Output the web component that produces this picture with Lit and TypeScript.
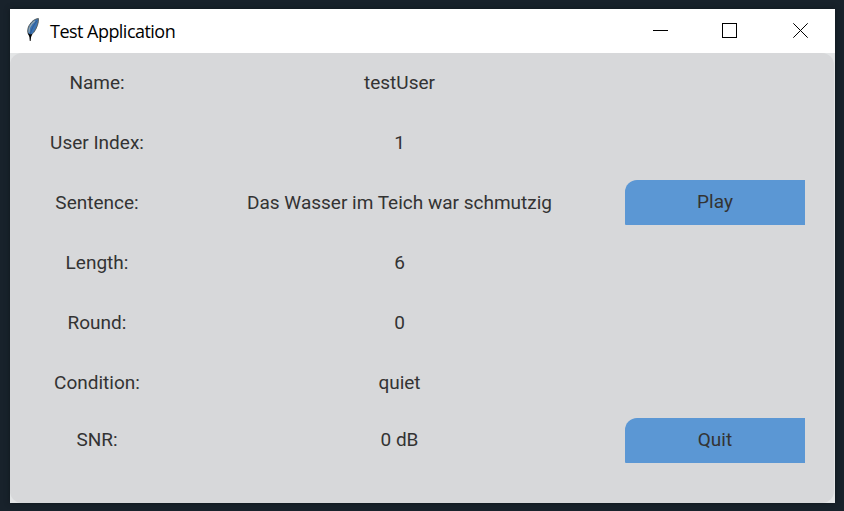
import { LitElement, html, css, svg } from "lit";
import { customElement, property } from "lit/decorators.js";

interface Field {
  label: string;
  value: string;
  action?: string;
}

const fields: Field[] = [
  { label: "Name:", value: "testUser" },
  { label: "User Index:", value: "1" },
  { label: "Sentence:", value: "Das Wasser im Teich war schmutzig", action: "Play" },
  { label: "Length:", value: "6" },
  { label: "Round:", value: "0" },
  { label: "Condition:", value: "quiet" },
  { label: "SNR:", value: "0 dB", action: "Quit" },
];

const controls = [
  { name: "Minimize", shape: svg`<path d="M0 7.5H15" />` },
  { name: "Maximize", shape: svg`<rect x="0.5" y="0.5" width="14" height="14" />` },
  { name: "Close", shape: svg`<path d="M0.3 0.3L14.7 14.7M14.7 0.3L0.3 14.7" shape-rendering="auto" />` },
];

@customElement("title-bar")
class TitleBar extends LitElement {
  @property() heading = "";

  static styles = css`
    :host {
      display: flex;
      height: 44px;
      background: #fff;
      color: #000;
    }
    .feather {
      width: 15px;
      height: 25px;
      margin: 8px 0 0 16px;
    }
    .heading {
      flex: 1;
      margin-left: 9px;
      font: 400 18px/45px "Open Sans", "Noto Sans", sans-serif;
      letter-spacing: -0.53px;
      white-space: nowrap;
    }
    .controls {
      display: flex;
      padding: 14px 27px 0 0;
      gap: 55px;
    }
    .control {
      width: 15px;
      height: 15px;
      padding: 0;
      border: 0;
      background: none;
    }
    .control:nth-child(2) {
      margin: 0 1px 0 -1px;
    }
    .glyph {
      display: block;
      fill: none;
      stroke: #000;
      stroke-width: 1;
      shape-rendering: crispEdges;
    }
  `;

  render() {
    return html`
      <svg class="feather" viewBox="0 0 15 25">
        <path d="M2.6 17.5C1 14.5 1.6 10.8 3.8 7.4C6 4 9 1.9 12.4 1.5C12.8 5.5 11 11.2 7.6 15.6C6.4 17 5.4 18 4.3 18.3Z" fill="#3b73b4" stroke="#59605f" stroke-width="1" />
        <path d="M3 15.5C2.8 11 5 7 8.8 4" fill="none" stroke="#9aa9ac" stroke-width="1.1" />
        <path d="M4.2 17.5C5.2 12.5 7.6 8 11 3.6" fill="none" stroke="#2b5488" stroke-width="0.8" />
        <path d="M1.8 16L4.2 17.6L6.3 17L5.1 20L4.6 24H3.8L3.4 20Z" fill="#000" />
      </svg>
      <div class="heading">${this.heading}</div>
      <div class="controls">
        ${controls.map(
          (c) => html`<button class="control" aria-label=${c.name}>
            <svg class="glyph" width="15" height="15" viewBox="0 0 15 15">${c.shape}</svg>
          </button>`
        )}
      </div>
    `;
  }
}

@customElement("app-root")
class AppRoot extends LitElement {
  static styles = css`
    :host {
      display: block;
      box-sizing: border-box;
      height: 511px;
      padding: 9px 9px 8px 10px;
      background: #18222b;
    }
    .window {
      background: #e3e5e6;
      height: 494px;
      box-shadow: 0 0 5px #10181e;
    }
    .panel {
      box-sizing: border-box;
      height: 450px;
      margin-right: 1px;
      border-radius: 12px;
      background: #d7d8da;
      display: grid;
      grid-template-columns: 174px 431px 219px;
      grid-template-rows: repeat(6, 60px) 54px;
      color: #333;
      font: 19px/24px Roboto, sans-serif;
    }
    .cell {
      display: flex;
      align-items: center;
      justify-content: center;
      white-space: nowrap;
    }
    .cell.actions {
      justify-content: flex-start;
      align-items: flex-start;
      padding: 7px 0 0 10px;
    }
    .cell.last {
      padding-top: 5px;
    }
    .action {
      width: 180px;
      height: 45px;
      padding: 0 0 2px;
      border: 0;
      border-radius: 12px 0 0 1px;
      background: #5b97d4;
      color: #333;
      font: inherit;
    }
  `;

  render() {
    return html`
      <div class="window">
        <title-bar heading="Test Application"></title-bar>
        <div class="panel">
          ${fields.map(
            (f, i) => html`
              <div class="cell">${f.label}</div>
              <div class="cell">${f.value}</div>
              <div class="cell actions ${i === fields.length - 1 ? "last" : ""}">
                ${f.action ? html`<button class="action">${f.action}</button>` : ""}
              </div>
            `
          )}
        </div>
      </div>
    `;
  }
}
